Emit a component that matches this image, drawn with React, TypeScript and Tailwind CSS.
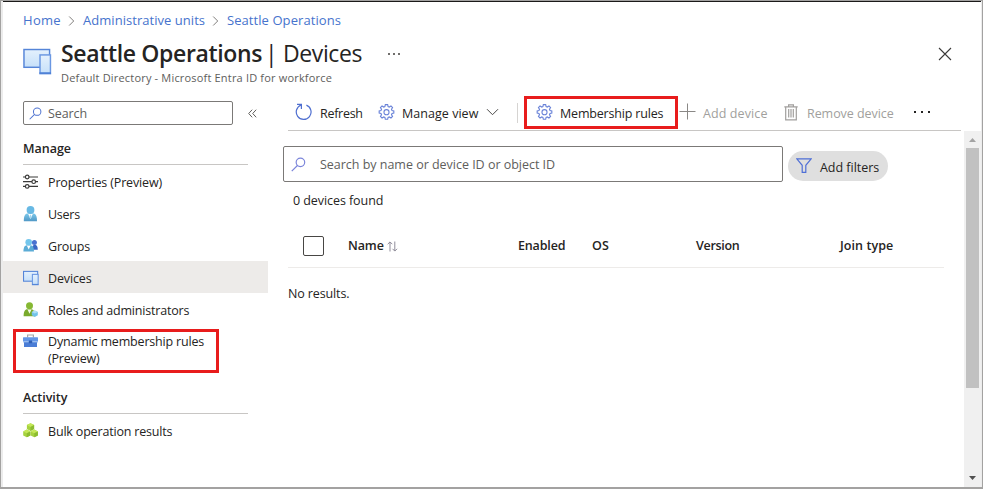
import type { ReactNode } from "react";

function DevicesIcon({ size }: { size: number }) {
  const line = size > 20 ? 1.5 : 2;
  return (
    <svg width={size} height={size} viewBox="0 0 30 30" fill="none" className="block">
      <defs>
        <linearGradient id="scr" x1="0" y1="0" x2="0" y2="1">
          <stop offset="0" stopColor="#e4f1fd" />
          <stop offset="1" stopColor="#c6e0f9" />
        </linearGradient>
      </defs>
      <rect x="1" y="2.6" width="26.5" height="18.4" fill="url(#scr)" stroke="#5585d8" strokeWidth={line} />
      <rect x="17.6" y="8.2" width="10.8" height="19.4" fill="url(#scr)" stroke="#6a97e2" strokeWidth={line} />
      <path d="M17 27h12" stroke="#4f81d6" strokeWidth="1.8" />
    </svg>
  );
}

function SearchIcon({ size, color }: { size: number; color: string }) {
  return (
    <svg width={size} height={size} viewBox="0 0 14 14" fill="none" stroke={color} strokeWidth="1.1" className="block">
      <circle cx="8.8" cy="5" r="4" />
      <path d="M6 7.9 0.7 13.2" />
    </svg>
  );
}

function GearIcon() {
  return (
    <svg width="17" height="17" viewBox="0 0 16 16" fill="none" stroke="#6a83d8" className="block">
      <path
        d="M6.9 .6h2.2l.4 1.8 1.1.45 1.6-1 1.5 1.5-1 1.6.5 1.1 1.7.4v2.1l-1.7.4-.5 1.1 1 1.6-1.5 1.5-1.6-1-1.1.45-.4 1.8H6.9l-.4-1.8-1.1-.45-1.6 1-1.5-1.5 1-1.6-.5-1.1-1.7-.4V6.45l1.7-.4.5-1.1-1-1.6 1.5-1.5 1.6 1 1.1-.45z"
        strokeWidth="1.05"
      />
      <circle cx="8" cy="7.7" r="2.4" />
    </svg>
  );
}

function RefreshIcon() {
  return (
    <svg width="18" height="18" viewBox="0 0 18 18" fill="none" stroke="#4f6fd0" strokeWidth="1.2" className="block">
      <path d="M11.4 2.1a7.4 7.4 0 1 1-5.2-.1" />
      <path d="M2 1.4h4.4v4.5" />
    </svg>
  );
}

function PropertiesIcon() {
  return (
    <svg width="16" height="16" viewBox="0 0 16 16" fill="#fff" stroke="#3b3a39" strokeWidth="1.2" className="block">
      <path d="M0 3h15M0 7.7h15M0 12.4h15" />
      <circle cx="4.2" cy="3" r="1.8" />
      <circle cx="10.7" cy="7.7" r="1.8" />
      <circle cx="4.2" cy="12.4" r="1.8" />
    </svg>
  );
}

function UserIcon() {
  return (
    <svg width="16" height="16" viewBox="0 0 16 16" className="block">
      <defs>
        <linearGradient id="usr" x1="0" y1="0" x2="0" y2="1">
          <stop offset="0" stopColor="#7cc8ea" />
          <stop offset="1" stopColor="#5098c6" />
        </linearGradient>
      </defs>
      <path d="M.8 15.2c0-5 1.2-7.6 4-7.6h5.2c2.8 0 4 2.6 4 7.6z" fill="url(#usr)" />
      <path d="M5.2 7.9h4.6l-2.3 5z" fill="#fff" />
      <path d="M7 8.8h1l.5 2.6-1 1.3-1-1.3z" fill="#a4d6ee" />
      <circle cx="7.5" cy="4" r="3.9" fill="#68b9e4" />
    </svg>
  );
}

function GroupIcon() {
  return (
    <svg width="16" height="16" viewBox="0 0 16 16" className="block">
      <path d="M9 11.8c0-3.2 1-5 2.8-5s3 1.8 3 5z" fill="#3a66c4" />
      <circle cx="11.4" cy="4.6" r="2.5" fill="#4a72d0" />
      <path d="M.4 13.6c0-4.2 1.2-6.4 3.4-6.4h3.8c2.3 0 3.4 2.2 3.4 6.4z" fill="#5cacd6" />
      <path d="M3.8 7.5h3.8l-1.9 4z" fill="#fff" />
      <circle cx="5.7" cy="4.2" r="3.3" fill="#74c6ec" />
    </svg>
  );
}

function RolesIcon() {
  return (
    <svg width="16" height="16" viewBox="0 0 16 16" className="block">
      <path d="M.6 14.2c0-4.5 1.3-7 3.6-7h4c2.3 0 3.8 2 3.8 7z" fill="#79aa2c" />
      <path d="M4.5 7.4h4l-2 4.4z" fill="#f4fae8" />
      <circle cx="6.5" cy="3.8" r="3.5" fill="#86b833" />
      <path d="m11.8 8.4 3 1.5v3.4l-3 1.7-3-1.7V9.9z" fill="#74c3ea" />
      <path d="m11.8 8.4 3 1.5-3 1.6-3-1.6z" fill="#b2e0f6" />
    </svg>
  );
}

function ToolboxIcon() {
  return (
    <svg width="16" height="16" viewBox="0 0 16 16" className="block">
      <path d="M4.6 3.6V1h5.8v2.6" fill="none" stroke="#a5a5a5" strokeWidth="1.2" />
      <rect x="0" y="3.2" width="15" height="4.4" rx=".5" fill="#6396e6" />
      <rect x="1" y="8" width="13" height="5" fill="#4a7dd6" />
      <rect x="0" y="7.3" width="15" height="1.1" fill="#8fb6ee" />
      <rect x="5.8" y="6.6" width="3.4" height="2.6" rx=".4" fill="#2f5fb4" />
    </svg>
  );
}

function Cube({ x, y }: { x: number; y: number }) {
  return (
    <g transform={`translate(${x} ${y})`}>
      <path d="M0 1.8 3.6 0l3.6 1.8v4L3.6 7.7 0 5.8z" fill="#a6d23f" />
      <path d="M0 1.8 3.6 0l3.6 1.8-3.6 1.9z" fill="#c4e857" />
      <path d="M3.6 3.7 7.2 1.8v4L3.6 7.7z" fill="#8cbc30" />
    </g>
  );
}

function CubesIcon() {
  return (
    <svg width="16" height="16" viewBox="0 0 16 16" className="block">
      <Cube x={3.9} y={0.2} />
      <Cube x={0.2} y={6.6} />
      <Cube x={7.7} y={6.6} />
    </svg>
  );
}

function TrashIcon() {
  return (
    <svg width="14" height="17" viewBox="0 0 14 17" fill="none" stroke="#a19f9d" strokeWidth="1.2" className="block">
      <path d="M.3 2.8h13.4M4.6 2.6V.9h4.8v1.7M1.7 3v12.9h10.6V3M4.7 5v8.6M7 5v8.6M9.3 5v8.6" />
    </svg>
  );
}

function Crumb({ className, children }: { className: string; children: ReactNode }) {
  return <a className={`shrink-0 text-[13px] text-[#4673cd] ${className}`}>{children}</a>;
}

function CrumbArrow() {
  return (
    <svg width="22" height="12" viewBox="0 0 22 12" fill="none" stroke="#807e7c" className="block shrink-0">
      <path d="M8.2 1.5 12.7 6l-4.5 4.5" />
    </svg>
  );
}

function NavRow({ icon, active, className, children }: { icon: ReactNode; active?: boolean; className: string; children: ReactNode }) {
  return (
    <li className={`flex h-8 items-center pl-5 ${active ? "bg-[#edebe9]" : ""}`}>
      <span className="w-[25px] shrink-0 pt-0.5">{icon}</span>
      <span className={`mt-1 ${className}`}>{children}</span>
    </li>
  );
}

function Header() {
  return (
    <header>
      <nav className="flex h-9 items-center pt-px pl-5">
        <Crumb className="w-[38px] tracking-[0.3px]">Home</Crumb>
        <CrumbArrow />
        <Crumb className="w-[122px] tracking-[0.04px]">Administrative units</Crumb>
        <CrumbArrow />
        <Crumb className="tracking-[0.07px]">Seattle Operations</Crumb>
      </nav>
      <div className="flex h-[54px] pl-5">
        <div className="w-[38px] shrink-0 pt-[9px]">
          <DevicesIcon size={29} />
        </div>
        <div>
          <div className="flex h-8 items-center text-[23px] leading-8 text-[#252423]">
            <h1 className="-mt-0.5 w-[204px] font-semibold tracking-[-0.35px]">Seattle Operations</h1>
            <span className="-mt-0.5 w-[18px]">|</span>
            <span className="-mt-0.5 w-[105px] tracking-[-0.4px]">Devices</span>
            <span className="flex gap-[3px]">
              <i className="size-[2px] bg-[#706e6c]" />
              <i className="size-[2px] bg-[#706e6c]" />
              <i className="size-[2px] bg-[#706e6c]" />
            </span>
          </div>
          <p className="text-[11px] leading-4 tracking-[0.18px] text-[#605e5c]">Default Directory - Microsoft Entra ID for workforce</p>
        </div>
        <button className="mt-[9px] mr-[29px] ml-auto self-start">
          <svg width="14" height="14" viewBox="0 0 14 14" stroke="#3b3a39" strokeWidth="1.1" className="block">
            <path d="m1 1 12 12M13 1 1 13" />
          </svg>
        </button>
      </div>
    </header>
  );
}

function Sidebar() {
  return (
    <aside className="w-[265px] shrink-0">
      <div className="flex items-center pt-[9px] pl-5">
        <label className="flex h-6 w-[210px] items-center rounded-[2px] border border-[#7b7977] pl-[5px]">
          <SearchIcon size={13} color="#4f73d0" />
          <span className="mt-0.5 pl-[6px] tracking-[-0.1px] text-[#605e5c]">Search</span>
        </label>
        <svg width="9" height="9" viewBox="0 0 9 9" fill="none" stroke="#605e5c" className="ml-[15px] block">
          <path d="M4.2.7.7 4.5l3.5 3.8M8.2.7 4.7 4.5l3.5 3.8" />
        </svg>
      </div>
      <div className="ml-5 h-10 w-[225px] border-b border-[#c8c6c4] pt-[14px] leading-5 font-semibold tracking-[-0.02px]">Manage</div>
      <ul>
        <NavRow icon={<PropertiesIcon />} className="tracking-[-0.14px]">Properties (Preview)</NavRow>
        <NavRow icon={<UserIcon />} className="tracking-[-0.24px]">Users</NavRow>
        <NavRow icon={<GroupIcon />} className="tracking-[-0.17px]">Groups</NavRow>
        <NavRow icon={<DevicesIcon size={16} />} active className="tracking-[-0.13px]">Devices</NavRow>
        <NavRow icon={<RolesIcon />} className="tracking-[-0.19px]">Roles and administrators</NavRow>
        <li className="relative flex h-[54px] pt-2 pl-5">
          <span className="w-[25px] shrink-0 pt-px">
            <ToolboxIcon />
          </span>
          <span className="leading-[17px] tracking-[-0.18px]">
            Dynamic membership rules
            <br />
            (Preview)
          </span>
          <span className="absolute top-1 left-[10px] h-11 w-[206px] border-[3px] border-[#e81c1c]" />
        </li>
      </ul>
      <div className="ml-5 h-[35px] w-[225px] border-b border-[#c8c6c4] pt-[9px] leading-5 font-semibold tracking-[-0.05px]">Activity</div>
      <ul>
        <NavRow icon={<CubesIcon />} className="tracking-[-0.18px]">Bulk operation results</NavRow>
      </ul>
    </aside>
  );
}

function Toolbar() {
  return (
    <div className="ml-5 flex h-[39px] w-[673px] items-center border-b border-[#c8c6c4] pt-1">
      <span className="w-8 pb-0.5 pl-[7px]">
        <RefreshIcon />
      </span>
      <span className="mt-0.5 w-[58px] tracking-[-0.28px]">Refresh</span>
      <span className="w-6 pb-0.5">
        <GearIcon />
      </span>
      <span className="mt-0.5 w-[84px] tracking-[0.04px]">Manage view</span>
      <svg width="13" height="8" viewBox="0 0 13 8" fill="none" stroke="#4b4a49" className="mb-0.5 block">
        <path d="M1 1.2 6.5 6.7 12 1.2" />
      </svg>
      <span className="ml-[18px] h-5 w-px bg-[#d6d4d2]" />
      <span className="mb-0.5 ml-[6px] flex h-[33px] w-[154px] shrink-0 items-center border-[3px] border-[#e81c1c] pl-[9px]">
        <span className="w-6">
          <GearIcon />
        </span>
        <span className="mt-[5px] tracking-[-0.18px]">Membership rules</span>
      </span>
      <svg width="17" height="17" viewBox="0 0 17 17" stroke="#8a8886" className="mb-[3px] ml-px block">
        <path d="M8.5 .5v16M.5 8.5h16" />
      </svg>
      <span className="mt-0.5 ml-[7px] w-[81px] tracking-[0.1px] text-[#a19f9d]">Add device</span>
      <span className="w-[23px] pb-0.5">
        <TrashIcon />
      </span>
      <span className="mt-0.5 w-[107px] tracking-[-0.06px] text-[#a19f9d]">Remove device</span>
      <span className="mb-[3px] flex gap-[5px]">
        <i className="size-[2px] bg-[#252423]" />
        <i className="size-[2px] bg-[#252423]" />
        <i className="size-[2px] bg-[#252423]" />
      </span>
    </div>
  );
}

function Results() {
  return (
    <section className="min-w-0 flex-1">
      <div className="flex items-center gap-[5px] pt-[15px] pl-[15px]">
        <label className="flex h-9 w-[500px] items-center rounded-[2px] border border-[#7b7977] pl-[7px]">
          <SearchIcon size={15} color="#7a84da" />
          <span className="mt-0.5 pl-[14px] tracking-[-0.02px] text-[#605e5c]">Search by name or device ID or object ID</span>
        </label>
        <button className="mt-[3px] flex h-[30px] w-[100px] items-center rounded-full bg-[#dfdfdf] pl-2">
          <svg width="16" height="15" viewBox="0 0 16 15" fill="none" stroke="#4f6fd6" strokeWidth="1.2" className="block">
            <path d="M.8.8h14.4L9.8 7.3v7H6.2v-7z" />
          </svg>
          <span className="mt-[5px] ml-2 tracking-[-0.03px]">Add filters</span>
        </button>
      </div>
      <p className="pt-[9px] pl-[25px] leading-5 tracking-[-0.07px]">0 devices found</p>
      <div className="mt-[13px] ml-5 flex h-11 w-[656px] items-center border-b border-[#edebe9] font-semibold">
        <span className="mt-px mr-6 ml-[15px] h-5 w-[21px] rounded-[2px] border border-[#484644]" />
        <span className="mt-px flex w-[170px] items-center">
          <span className="w-[39px] tracking-[-0.1px]">Name</span>
          <svg width="11" height="11" viewBox="0 0 11 11" fill="none" stroke="#8f8c9a" className="block">
            <path d="M3 10.5V1M.7 3.2 3 .9l2.3 2.3M7.8.5V10M5.5 7.8l2.3 2.3 2.3-2.3" />
          </svg>
        </span>
        <span className="mt-px w-[74px] tracking-[-0.15px]">Enabled</span>
        <span className="mt-px w-[104px] tracking-[0.2px]">OS</span>
        <span className="mt-px w-36 tracking-[-0.3px]">Version</span>
        <span className="mt-px tracking-[0.08px]">Join type</span>
      </div>
      <p className="pt-4 pl-5 leading-5 tracking-[-0.12px]">No results.</p>
    </section>
  );
}

function Scrollbar() {
  return (
    <div className="flex w-[17px] shrink-0 flex-col items-center bg-[#f0f0f0]">
      <svg width="7" height="4" viewBox="0 0 7 4" className="mt-[7px] block" fill="#a3a3a3">
        <path d="M3.5 0 7 4H0z" />
      </svg>
      <div className="mt-[6px] h-60 w-[13px] bg-[#c1c1c1]" />
      <svg width="7" height="4" viewBox="0 0 7 4" className="mt-auto mb-[7px] block" fill="#505050">
        <path d="M3.5 4 7 0H0z" />
      </svg>
    </div>
  );
}

export default function App() {
  return (
    <div className="h-[489px] w-[983px] border border-b-2 border-[#a3a2a1] bg-[#ececec] font-['Open_Sans','Noto_Sans',sans-serif] text-[12.5px] whitespace-nowrap text-[#252423]">
      <div className="ml-0.5 flex h-full w-[978px] flex-col border-t border-[#1b1a19] bg-white">
        <Header />
        <div className="flex min-h-0 flex-1">
          <Sidebar />
          <main className="flex min-w-0 flex-1 flex-col">
            <Toolbar />
            <div className="flex min-h-0 flex-1">
              <Results />
              <Scrollbar />
            </div>
          </main>
        </div>
      </div>
    </div>
  );
}
